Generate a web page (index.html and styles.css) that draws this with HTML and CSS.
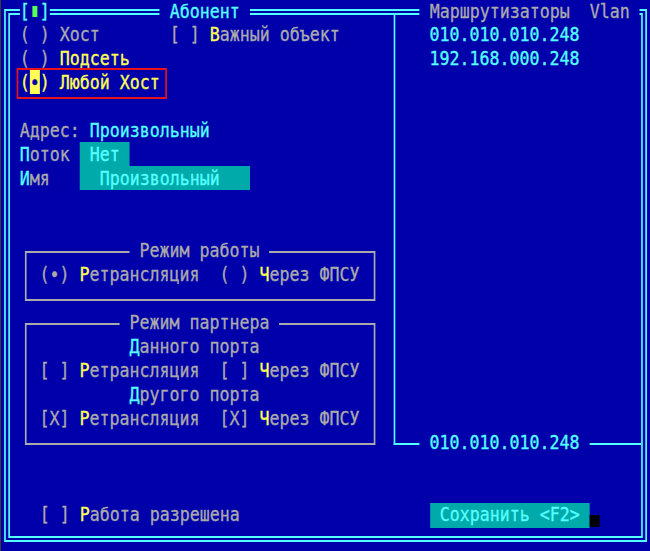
FILE: index.html
```html
<!DOCTYPE html>
<html lang="ru">
<head>
<meta charset="utf-8">
<title>Абонент</title>
<link rel="stylesheet" href="styles.css">
</head>
<body>
<div class="screen">
  <div class="frame">
    <div class="titlebar"><span class="legend tl-close cy">[<i class="mark"></i>]</span><span class="legend tl-main cy"> Абонент </span><span class="legend tl-routes gr"> Маршрутизаторы  Vlan </span></div>
    <div class="main">
      <div class="left">
        <div class="row"><span class="col15 gr">( ) Хост</span><span class="gr">[ ] </span><span class="yl">В</span><span class="gr">ажный объект</span></div>
        <div class="row"><span class="gr">( ) </span><span class="yl">Подсеть</span></div>
        <div class="row"><span class="focus yl">(<span class="cur">•</span>) Любой Хост</span></div>
        <div class="row"></div>
        <div class="row"><span class="gr">Адрес: </span><span class="cy">Произвольный</span></div>
        <div class="row"><span class="field-label"><span class="cy">П</span><span class="gr">оток</span></span><span class="field"> Нет </span></div>
        <div class="row"><span class="field-label"><span class="cy">И</span><span class="gr">мя</span></span><span class="field">  Произвольный   </span></div>
        <div class="box box-mode">
          <div class="box-title"><span class="legend gr ind9"> Режим работы </span></div>
          <div class="row"><span class="gr">(•) </span><span class="yl">Р</span><span class="gr">етрансляция  ( ) </span><span class="yl">Ч</span><span class="gr">ерез ФПСУ</span></div>
        </div>
        <div class="box box-partner">
          <div class="box-title"><span class="legend gr ind8"> Режим партнера </span></div>
          <div class="row"><span class="ind9"><span class="cy">Д</span><span class="gr">анного порта</span></span></div>
          <div class="row"><span class="gr">[ ] </span><span class="yl">Р</span><span class="gr">етрансляция  [ ] </span><span class="yl">Ч</span><span class="gr">ерез ФПСУ</span></div>
          <div class="row"><span class="ind9"><span class="cy">Д</span><span class="gr">ругого порта</span></span></div>
          <div class="row"><span class="gr">[X] </span><span class="yl">Р</span><span class="gr">етрансляция  [X] </span><span class="yl">Ч</span><span class="gr">ерез ФПСУ</span></div>
        </div>
      </div>
      <div class="right">
        <div class="row cy">010.010.010.248</div>
        <div class="row cy">192.168.000.248</div>
        <div class="bottom-label"><span class="legend cy"> 010.010.010.248 </span></div>
      </div>
    </div>
    <div class="status"><span class="status-text"><span class="gr">[ ] </span><span class="yl">Р</span><span class="gr">абота разрешена</span></span><span class="button"> Сохранить &lt;F2&gt; </span><span class="shadow"></span></div>
  </div>
</div>
</body>
</html>
```

FILE: styles.css
```css
html, body {
  margin: 0;
  padding: 0;
}

body {
  background: #0000aa;
  overflow: hidden;
  width: 650px;
  height: 551px;
  box-shadow: inset 1px 0 0 #3a3a3a;
}

.screen {
  font-family: "DejaVu Sans Mono", "Liberation Mono", monospace;
  font-size: 20px;
  line-height: 20px;
  width: 65ch;
  height: 551px;
  color: #aaaaaa;
  -webkit-text-stroke: 0.35px currentColor;
  transform: scaleX(0.8305);
  transform-origin: 0 0;
}

.row, .titlebar, .box-title, .bottom-label, .status-text, .button {
  white-space: pre;
}

.cy { color: #55ffff; }
.gr { color: #aaaaaa; }
.yl { color: #ffff55; }

.frame {
  box-sizing: border-box;
  height: 533px;
  margin: 9px 0.3ch 9px 0.4ch;
  border-style: double;
  border-color: #55ffff;
  border-width: 6px 0.6ch;
}

.legend {
  background: #0000aa;
}

.titlebar {
  height: 24px;
  line-height: 23px;
  margin-top: -15px;
  padding-left: 1ch;
}

.tl-main { margin-left: 11ch; }
.tl-routes { margin-left: 17ch; }

.mark {
  display: inline-block;
  width: 0.45ch;
  height: 11px;
  margin: 6px 0.28ch 0 0.27ch;
  vertical-align: top;
  background: #55ff55;
}

.main {
  display: flex;
  align-items: flex-start;
  margin-top: -9px;
}

.left {
  display: flex;
  flex-direction: column;
  width: 38.4ch;
  padding-top: 9px;
}

.row {
  height: 24px;
}

.left > .row {
  padding-left: 1ch;
}

.col15 {
  display: inline-block;
  width: 15ch;
}

.focus {
  position: relative;
}

.focus::after {
  content: "";
  position: absolute;
  left: -0.3ch;
  right: -0.7ch;
  top: -2px;
  bottom: -5px;
  border-style: solid;
  border-color: #e8141c;
  border-width: 2px 0.2ch;
}

.cur {
  background: #ffff55;
  color: #0000aa;
}

.field-label {
  display: inline-block;
  width: 6ch;
}

.field {
  background: #00aaaa;
  color: #55ffff;
}

.box {
  box-sizing: border-box;
  width: 35.1ch;
  margin-left: 1.5ch;
  padding: 0 0 11px 1.3ch;
  border-style: solid;
  border-color: #aaaaaa;
  border-width: 2px 0.2ch;
}

.box-mode {
  margin-top: 59px;
}

.box-partner {
  margin-top: 22px;
  margin-bottom: 11px;
}

.box-title {
  height: 24px;
  margin-top: -13px;
}

.ind9 { margin-left: 9ch; }
.ind8 { margin-left: 8ch; }

.right {
  box-sizing: border-box;
  flex: 1;
  height: 430px;
  display: flex;
  flex-direction: column;
  padding: 9px 0 0 3.4ch;
  border-left: 0.2ch solid #55ffff;
  border-bottom: 2px solid #55ffff;
}

.bottom-label {
  height: 24px;
  margin-top: auto;
  margin-bottom: -13px;
  margin-left: -1ch;
}

.status {
  display: flex;
  height: 24px;
  padding-top: 48px;
  padding-left: 3ch;
}

.status-text {
  width: 39ch;
}

.button {
  background: #00aaaa;
  color: #55ffff;
  padding-top: 1px;
  margin-top: -1px;
}

.shadow {
  align-self: flex-end;
  width: 1ch;
  height: 12px;
  margin-bottom: 1px;
  background: #000000;
}
```
